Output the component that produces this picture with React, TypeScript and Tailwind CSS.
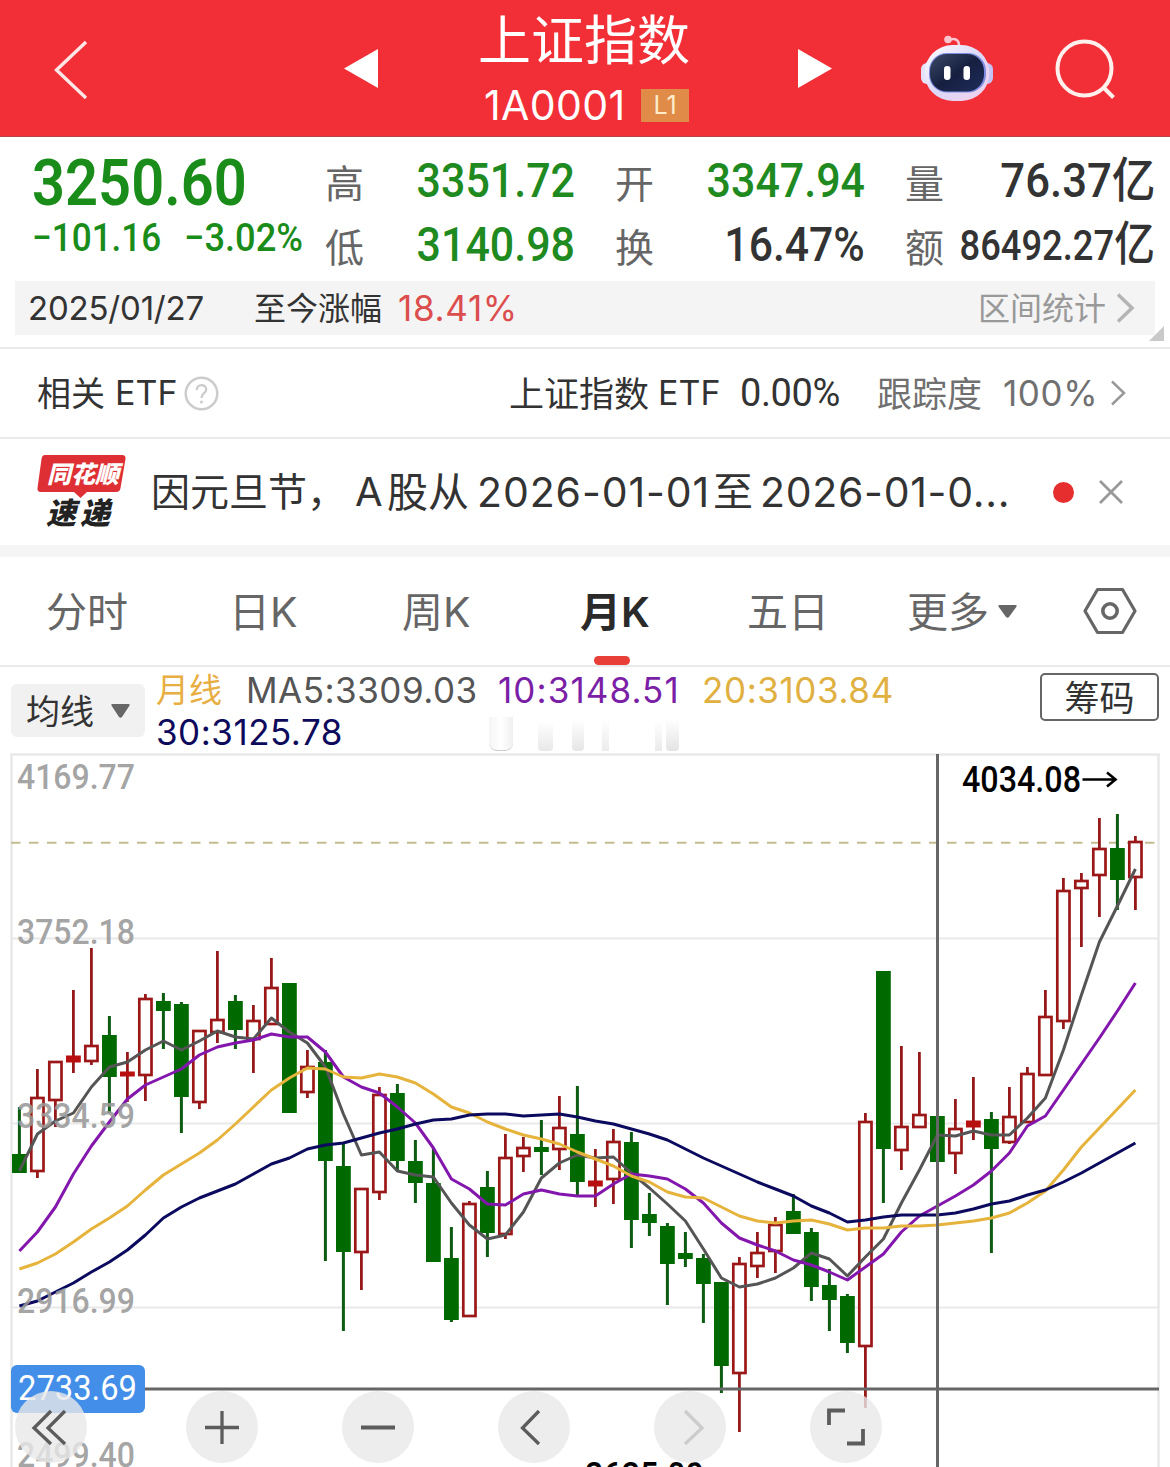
import { ReactNode } from 'react';

type Candle = ['up' | 'down', number, number, number, number];

// direction, high, body top, body bottom, low
const CANDLES: Candle[] = [
    ['down', 1107, 1154, 1173, 1173],
    ['up', 1069, 1097, 1171, 1178],
    ['up', 1061, 1061, 1100, 1127],
    ['up', 990, 1056, 1062, 1073],
    ['up', 948, 1045, 1061, 1065],
    ['down', 1016, 1035, 1077, 1113],
    ['up', 1052, 1072, 1076, 1102],
    ['up', 994, 998, 1075, 1101],
    ['down', 993, 1001, 1011, 1049],
    ['down', 1002, 1004, 1097, 1133],
    ['up', 1030, 1030, 1102, 1109],
    ['up', 951, 1019, 1032, 1043],
    ['down', 995, 1001, 1030, 1049],
    ['up', 1005, 1020, 1039, 1073],
    ['up', 958, 987, 1024, 1024],
    ['down', 983, 983, 1113, 1113],
    ['up', 1050, 1066, 1092, 1098],
    ['down', 1050, 1062, 1161, 1261],
    ['down', 1143, 1166, 1252, 1331],
    ['up', 1188, 1188, 1252, 1290],
    ['up', 1087, 1094, 1192, 1200],
    ['down', 1084, 1093, 1161, 1172],
    ['down', 1140, 1161, 1183, 1203],
    ['down', 1148, 1183, 1262, 1262],
    ['down', 1227, 1258, 1320, 1322],
    ['up', 1201, 1203, 1316, 1316],
    ['down', 1171, 1187, 1233, 1257],
    ['up', 1134, 1157, 1234, 1239],
    ['up', 1137, 1147, 1156, 1172],
    ['down', 1120, 1147, 1152, 1175],
    ['up', 1096, 1127, 1149, 1170],
    ['down', 1086, 1134, 1182, 1195],
    ['up', 1149, 1181, 1186, 1207],
    ['up', 1129, 1141, 1179, 1204],
    ['down', 1132, 1142, 1220, 1248],
    ['down', 1193, 1214, 1223, 1236],
    ['down', 1223, 1226, 1264, 1305],
    ['down', 1232, 1253, 1259, 1267],
    ['down', 1254, 1258, 1284, 1323],
    ['down', 1282, 1282, 1366, 1393],
    ['up', 1257, 1263, 1373, 1432],
    ['up', 1232, 1252, 1266, 1278],
    ['up', 1217, 1224, 1251, 1273],
    ['down', 1194, 1211, 1234, 1234],
    ['down', 1228, 1232, 1287, 1301],
    ['down', 1269, 1285, 1300, 1331],
    ['down', 1294, 1296, 1343, 1353],
    ['up', 1113, 1121, 1346, 1408],
    ['down', 971, 971, 1149, 1203],
    ['up', 1046, 1126, 1150, 1170],
    ['up', 1052, 1114, 1127, 1128],
    ['down', 1116, 1116, 1162, 1162],
    ['up', 1099, 1128, 1153, 1174],
    ['up', 1077, 1121, 1127, 1140],
    ['down', 1112, 1119, 1149, 1253],
    ['up', 1087, 1116, 1142, 1144],
    ['up', 1067, 1073, 1122, 1122],
    ['up', 990, 1016, 1075, 1075],
    ['up', 878, 890, 1021, 1029],
    ['up', 873, 880, 888, 947],
    ['up', 818, 848, 875, 917],
    ['down', 814, 848, 880, 910],
    ['up', 836, 841, 877, 910],
];

const MA5 = [
    1171, 1134, 1121, 1113, 1087, 1067, 1062, 1050, 1041, 1050, 1041, 1031, 1037, 1039, 1018, 1032,
    1043, 1067, 1114, 1155, 1152, 1171, 1175, 1177, 1203, 1225, 1239, 1235, 1212, 1178, 1163, 1155,
    1158, 1157, 1173, 1188, 1204, 1221, 1249, 1278, 1287, 1284, 1278, 1268, 1253, 1259, 1276, 1257,
    1239, 1203, 1170, 1135, 1136, 1131, 1135, 1135, 1118, 1098, 1050, 995, 942, 906, 869,
];
const MA10 = [
    1251, 1232, 1207, 1174, 1146, 1122, 1099, 1085, 1077, 1069, 1055, 1047, 1043, 1040, 1034, 1037,
    1037, 1052, 1077, 1087, 1093, 1107, 1123, 1148, 1179, 1189, 1204, 1205, 1194, 1190, 1194, 1196,
    1196, 1184, 1174, 1176, 1179, 1189, 1203, 1223, 1238, 1245, 1251, 1260, 1265, 1272, 1280, 1267,
    1254, 1232, 1216, 1206, 1196, 1185, 1171, 1153, 1126, 1116, 1090, 1064, 1038, 1011, 983,
];
const MA20 = [
    1269, 1263, 1254, 1242, 1229, 1218, 1206, 1190, 1175, 1164, 1153, 1140, 1124, 1107, 1090, 1078,
    1068, 1069, 1077, 1078, 1074, 1077, 1083, 1094, 1107, 1113, 1122, 1129, 1135, 1139, 1144, 1152,
    1159, 1166, 1176, 1182, 1192, 1197, 1198, 1207, 1216, 1221, 1223, 1221, 1220, 1224, 1230, 1228,
    1228, 1226, 1226, 1225, 1223, 1221, 1218, 1213, 1203, 1191, 1170, 1147, 1128, 1109, 1090,
];
const MA30 = [
    1306, 1301, 1292, 1283, 1272, 1262, 1250, 1235, 1218, 1207, 1198, 1191, 1184, 1174, 1164, 1158,
    1149, 1145, 1143, 1138, 1133, 1129, 1124, 1120, 1119, 1115, 1114, 1114, 1116, 1115, 1114, 1117,
    1121, 1124, 1129, 1134, 1140, 1149, 1158, 1166, 1174, 1182, 1189, 1196, 1206, 1213, 1222, 1220,
    1217, 1215, 1215, 1215, 1213, 1209, 1204, 1201, 1195, 1190, 1182, 1173, 1163, 1153, 1143,
];

const xAt = (i: number) => 19.4 + i * 18;
const toPoints = (ys: number[]) => ys.map((y, i) => `${xAt(i)},${y}`).join(' ');

const DIN = "font-['Roboto','Noto_Sans_CJK_SC',sans-serif]";

export default function App() {
    return (
        <div className="w-[1170px] h-[1467px] overflow-hidden bg-white text-[#333] whitespace-nowrap font-['Inter','Noto_Sans_CJK_SC',sans-serif]">
            <Header />
            <Quote />
            <EtfRow />
            <NewsRow />
            <Tabs />
            <Indicators />
            <Chart />
        </div>
    );
}

function Header() {
    return (
        <header className="h-[137px] flex bg-[#f22f37] border-b border-[#b8414a] text-white">
            <svg className="mt-[38px] ml-[52px] shrink-0" width="38" height="64" viewBox="0 0 38 64" fill="none">
                <path d="M34 4 4.5 32 34 60" stroke="#ffe6e6" strokeWidth="3.4" />
            </svg>
            <svg className="mt-[49px] ml-[254px] shrink-0" width="34" height="39" viewBox="0 0 34 39">
                <path d="M34 0v39L0 19.5z" fill="#fff" />
            </svg>
            <div className="ml-[87px] w-[245px] flex flex-col">
                <h1 className="h-[70px] pl-[13px] leading-[74px] text-[53px] font-['Noto_Sans_CJK_SC',sans-serif]">上证指数</h1>
                <div className="mt-[15px] w-full flex items-center pl-[19px]">
                    <span className="w-[157px] leading-[40px] text-[41px] tracking-[0.4px]">1A0001</span>
                    <span className="w-[48px] h-[33px] bg-[#e08c48] text-[#ffeccb] text-[25px] leading-[33px] text-center">
                        L1
                    </span>
                </div>
            </div>
            <svg className="mt-[49px] ml-[88px] shrink-0" width="34" height="39" viewBox="0 0 34 39">
                <path d="M0 0v39l34-19.5z" fill="#fff" />
            </svg>
            <Robot />
            <svg className="mt-[36px] ml-[60px] shrink-0" width="66" height="66" viewBox="0 0 66 66" fill="none" stroke="#fff0ee" strokeWidth="4">
                <circle cx="30.5" cy="32.5" r="27" />
                <path d="m49.500 51.500 10 10" />
            </svg>
        </header>
    );
}

function Robot() {
    return (
        <svg className="mt-[34px] ml-[88px] shrink-0" width="74" height="68" viewBox="0 0 74 68">
            <defs>
                <linearGradient id="shell" x1="0" y1="0" x2="1" y2="1">
                    <stop offset="0" stopColor="#fff" />
                    <stop offset="0.5" stopColor="#dcd8f8" />
                    <stop offset="1" stopColor="#f3cfea" />
                </linearGradient>
                <linearGradient id="visor" x1="0" y1="0" x2="1" y2="1">
                    <stop offset="0" stopColor="#3d4a66" />
                    <stop offset="0.5" stopColor="#161f40" />
                    <stop offset="1" stopColor="#1f2c5c" />
                </linearGradient>
            </defs>
            <path d="M30 5.500c6-1.500 9 1 9 6" fill="none" stroke="#fbc6d0" strokeWidth="2.500" />
            <circle cx="28" cy="5.500" r="3.800" fill="#fbc6d0" />
            <rect x="1" y="29" width="12" height="21" rx="6" fill="#e3e2fa" />
            <rect x="61" y="29" width="12" height="21" rx="6" fill="#c4c2f4" />
            <rect x="4.500" y="11" width="65" height="56" rx="28" fill="url(#shell)" />
            <rect x="9" y="19" width="57" height="39.500" rx="18" fill="#7d8be0" />
            <rect x="10" y="20" width="54" height="37.500" rx="17" fill="url(#visor)" />
            <rect x="24" y="32" width="6.500" height="14" rx="3.200" fill="#fff" />
            <rect x="43.500" y="32" width="6.500" height="14" rx="3.200" fill="#fff" />
        </svg>
    );
}

function Stat({ label, children }: { label: string; children: ReactNode }) {
    return (
        <div className="w-[250px] h-16 flex items-center justify-between">
            <span className="w-[39px] shrink-0 text-[39px] leading-[66px] text-[#666] font-normal font-['Noto_Sans_CJK_SC',sans-serif]">
                {label}
            </span>
            <span className="w-[205px] flex justify-end">{children}</span>
        </div>
    );
}

function Quote() {
    return (
        <section className="h-[212px] border-b-2 border-[#eaeaea]">
            <div className={`h-[144px] pt-3 pl-8 flex font-medium ${DIN}`}>
                <div className="w-[293px] text-[#1a8c1a]">
                    <div className="h-[65px] leading-[68px] text-[65px] font-semibold origin-left scale-x-[0.89]">3250.60</div>
                    <div className="h-12 leading-[48px] text-[39px] flex">
                        <span className="w-[152px] origin-left scale-x-[0.9]">−101.16</span>
                        <span className="origin-left scale-x-[0.93]">−3.02%</span>
                    </div>
                </div>
                <div className="flex gap-[40px] text-[48px] leading-[64px]">
                    <div>
                        <Stat label="高">
                            <span className="origin-right scale-x-[0.895] text-[#1f8a1f]">3351.72</span>
                        </Stat>
                        <Stat label="低">
                            <span className="origin-right scale-x-[0.895] text-[#1f8a1f]">3140.98</span>
                        </Stat>
                    </div>
                    <div>
                        <Stat label="开">
                            <span className="origin-right scale-x-[0.895] text-[#1f8a1f]">3347.94</span>
                        </Stat>
                        <Stat label="换">
                            <span className="origin-right scale-x-[0.89]">16.47%</span>
                        </Stat>
                    </div>
                    <div>
                        <Stat label="量">
                            <span className="origin-right scale-x-[0.91]">76.37亿</span>
                        </Stat>
                        <Stat label="额">
                            <span className="origin-right scale-x-[0.865] text-[42px]">
                                86492.27<span className="text-[47px]">亿</span>
                            </span>
                        </Stat>
                    </div>
                </div>
            </div>
            <div className="relative mx-[15px] h-[54px] pl-[13px] pr-[20px] flex items-center bg-[#f4f4f4] text-[33px] leading-[54px]">
                <span className="w-[226px] tracking-[-0.2px]">2025/01/27</span>
                <span className="w-[144px] text-[32px] pt-[2px]">至今涨幅</span>
                <span className="text-[35px] tracking-[0.700px] text-[#dc4d4d]">18.41%</span>
                <span className="ml-auto text-[32px] pt-[2px] text-[#999]">区间统计</span>
                <svg className="ml-[10px]" width="19" height="30" viewBox="0 0 19 30" fill="none">
                    <path d="m2 1.500 14 13.500L2 28.500" stroke="#b4b4b4" strokeWidth="3.500" />
                </svg>
                <svg className="absolute -right-[9px] top-[45px]" width="15" height="15" viewBox="0 0 15 15">
                    <path d="M15 0v15H0z" fill="#c9c9c9" />
                </svg>
            </div>
        </section>
    );
}

function EtfRow() {
    return (
        <section className="h-[90px] pl-[37px] flex items-center border-b-2 border-[#eaeaea] text-[34px] leading-[88px]">
            <span className="w-[78px] pt-[2px]">相关</span>
            <span className="w-[69px]">ETF</span>
            <svg width="35" height="35" viewBox="0 0 35 35" fill="none" stroke="#ccc">
                <circle cx="17.500" cy="17.500" r="15.800" strokeWidth="2.500" />
                <path d="M12.800 14c0-6.500 9.400-6.300 9.400-.6 0 4-4.700 3.600-4.700 8.600" strokeWidth="2.300" />
                <circle cx="17.500" cy="26" r="1.600" fill="#ccc" stroke="none" />
            </svg>
            <span className="ml-[290px] w-[149px] text-[35px] pt-[2px]">上证指数</span>
            <span className="w-[82px]">ETF</span>
            <span className={`w-[137px] text-[38px] tracking-[-0.4px] ${DIN}`}>0.00%</span>
            <span className="w-[126px] text-[35px] pt-[2px] text-[#707070]">跟踪度</span>
            <span className="w-[107px] text-[35px] tracking-[0.6px] text-[#707070]">100%</span>
            <svg width="16" height="26" viewBox="0 0 16 26" fill="none">
                <path d="m2 1.500 12 11.500L2 24.500" stroke="#999" strokeWidth="2.500" />
            </svg>
        </section>
    );
}

function NewsRow() {
    return (
        <section className="h-[118px] pl-[37px] flex items-center border-b-[12px] border-[#f5f5f5]">
            <div className="relative w-[114px] h-[74px] font-black italic font-['Noto_Sans_CJK_SC',sans-serif]">
                <svg className="absolute left-0 top-0" width="90" height="44" viewBox="0 0 90 44">
                    <path d="M8 0h77q4 0 3.500 4l-5 29q-.5 4-4.500 4H50l-6.500 6L37 37H4q-4 0-3.500-4l4-29q.5-4 3.500-4z" fill="#de3034" />
                </svg>
                <div className="relative pl-[10px] h-[37px] leading-[35px] text-[24px] text-white">同花顺</div>
                <div className="relative pl-[9px] h-[37px] leading-[38px] text-[30px] tracking-[4px] text-[#222]">速递</div>
            </div>
            <p className="w-[902px] leading-[106px] text-[40px] flex">
                <span className="w-[204px] text-[39px]">因元旦节，</span>
                <span className="w-[32px]">A</span>
                <span className="w-[90px] text-[41px]">股从</span>
                <span className="w-[236px] text-[41px] tracking-[0.9px]">2026-01-01</span>
                <span className="w-[47px]">至</span>
                <span className="text-[41px] tracking-[0.700px]">2026-01-0...</span>
            </p>
            <span className="w-[21px] h-[21px] rounded-full bg-[#e62e2e]" />
            <svg className="ml-[24px]" width="26" height="26" viewBox="0 0 26 26" fill="none">
                <path d="m2 2 22 22M24 2 2 24" stroke="#999" strokeWidth="2.800" />
            </svg>
        </section>
    );
}

function Tabs() {
    return (
        <nav className="h-[110px] pl-[46px] flex items-center border-b-2 border-[#eaeaea] text-[41px] leading-[105px] text-[#666]">
            <span className="w-[183px] pt-[3px]">分时</span>
            <span className="w-[173px] pt-[3px]">日K</span>
            <span className="w-[178px] pt-[3px]">周K</span>
            <span className="relative w-[167px] pt-[3px] font-semibold text-[#2a2a2a]">
                月K
                <i className="absolute left-[14px] bottom-0 w-[36px] h-[9px] rounded-full bg-[#e93f39]" />
            </span>
            <span className="w-[160px] pt-[3px]">五日</span>
            <span className="w-[91px] pt-[3px]">更多</span>
            <svg width="19" height="13" viewBox="0 0 19 13">
                <path d="M1.500 0h16q2 0 .7 2L11 12q-1.500 1.500-3 0L.8 2q-1.300-2 .7-2z" fill="#666" />
            </svg>
            <svg className="ml-[66px]" width="54" height="48" viewBox="0 0 54 48" fill="none" stroke="#666">
                <path d="M14.500 2.500h25L52 24 39.500 45.500h-25L2 24z" strokeWidth="3.200" strokeLinejoin="round" />
                <circle cx="27" cy="24" r="7.200" strokeWidth="3.600" />
            </svg>
        </nav>
    );
}

function Indicators() {
    return (
        <section className="relative h-[86px] flex text-[35px]">
            <button className="mt-[17px] ml-[11px] w-[134px] h-[53px] pl-[15px] flex items-center text-left rounded-md bg-[#f1f1f1] text-[34px] leading-[51px]">
                <span className="w-[85px] pt-[2px]">均线</span>
                <svg width="19" height="14" viewBox="0 0 19 14">
                    <path d="M1.500 0h16q2 0 .7 2L11 13q-1.500 1.500-3 0L.8 2q-1.300-2 .7-2z" fill="#666" />
                </svg>
            </button>
            <div className="ml-[11px] w-[884px] leading-[42px] pt-[2px] tracking-[0.5px]">
                <div className="h-[42px] flex">
                    <span className="w-[90px] text-[33px] tracking-normal text-[#e8ae42]">月线</span>
                    <span className="w-[252px] text-[#555]">MA5:3309.03</span>
                    <span className="w-[204px] tracking-[1.100px] text-[#7a1fa6]">10:3148.51</span>
                    <span className="tracking-[0.600px] text-[#e0b040]">20:3103.84</span>
                </div>
                <div className="text-[#0d0a5c]">30:3125.78</div>
            </div>
            <button className="mt-[6px] w-[119px] h-[48px] rounded-[5px] border-2 border-[#666] text-[35px] leading-[46px]">
                筹码
            </button>
            {/* Fading remains of a caption */}
            <div className="absolute left-[489px] top-[50px] h-[34px] flex items-end">
                <i className="w-[24px] h-[34px] rounded-b-lg border-b border-[#ccc] bg-linear-to-r from-[#f5f5f5] via-white to-[#f0f0f0]" />
                <i className="ml-[25px] w-[15px] h-[30px] rounded-b bg-linear-to-b from-white to-[#e8e8e8]" />
                <i className="ml-[19px] w-[12px] h-[32px] rounded-b bg-linear-to-b from-white to-[#e6e6e6]" />
                <i className="ml-[18px] w-[7px] h-[32px] bg-linear-to-b from-white to-[#ececec]" />
                <i className="ml-[46px] w-[7px] h-[30px] bg-linear-to-b from-white to-[#eaeaea]" />
                <i className="ml-[4px] w-[13px] h-[32px] rounded-b bg-linear-to-b from-white to-[#e4e4e4]" />
            </div>
        </section>
    );
}

function CandleShape({ candle, x }: { candle: Candle; x: number }) {
    const [dir, high, top, bottom, low] = candle;
    if (dir === 'down') {
        return (
            <g fill="#006a00">
                <rect x={x - 1.5} y={high} width="3" height={low - high} fill="#0d5c12" />
                <rect x={x - 7.4} y={top} width="14.800" height={bottom - top} />
            </g>
        );
    }
    return (
        <g fill="#961a1a">
            <rect x={x - 1.4} y={high} width="2.800" height={top - high} />
            <rect x={x - 1.4} y={bottom} width="2.800" height={low - bottom} />
            {bottom - top < 7 ? (
                <rect x={x - 7.4} y={top - 0.5} width="14.800" height={bottom - top + 1} fill="#b80f0f" />
            ) : (
                <rect x={x - 6.1} y={top + 1} width="12.200" height={bottom - top - 1} fill="#fff" stroke="#9c1818" strokeWidth="2.700" />
            )}
        </g>
    );
}

const SCALE: [string, number][] = [
    ['4169.77', 789],
    ['3752.18', 943.5],
    ['3334.59', 1128],
    ['2916.99', 1312.5],
    ['2499.40', 1467],
];

function Chart() {
    return (
        <section className="relative h-[714px]">
            <svg className={DIN} width="1170" height="714" viewBox="0 753 1170 714" fill="none">
                <g stroke="#e9e9e9" strokeWidth="2">
                    <path d="M10 754.500H1160M11.500 754V1467M1158.500 754V1467" strokeWidth="2.500" />
                    <path d="M12 938.500H1158M12 1123.500H1158M12 1307.500H1158" />
                </g>
                <path d="M11 842.700H1158" stroke="#c4bd90" strokeWidth="2" strokeDasharray="9.500 8.500" />
                {CANDLES.map((candle, i) => (
                    <CandleShape key={i} candle={candle} x={xAt(i)} />
                ))}
                <g strokeWidth="3" strokeLinejoin="round">
                    <polyline points={toPoints(MA5)} stroke="#555" />
                    <polyline points={toPoints(MA10)} stroke="#8316ac" />
                    <polyline points={toPoints(MA20)} stroke="#e6b43c" />
                    <polyline points={toPoints(MA30)} stroke="#0b0a5e" />
                </g>
                <g fill="#999" fillOpacity="0.9" fontSize="35" fontWeight="500">
                    {SCALE.map(([label, y]) => (
                        <text key={label} x="17" y={y} textLength="118" lengthAdjust="spacingAndGlyphs">
                            {label}
                        </text>
                    ))}
                </g>

                {/* Crosshair */}
                <path d="M937.500 754V1467" stroke="#666" strokeWidth="3" />
                <path d="M145 1389H1159" stroke="#666" strokeWidth="3" />
                <rect x="11" y="1365" width="134" height="48" rx="6" fill="#428ee8" />
                <text x="18" y="1400" fontSize="35" fill="#fff" textLength="119" lengthAdjust="spacingAndGlyphs">
                    2733.69
                </text>

                <g fill="#000" fontSize="36" fontWeight="500">
                    <text x="962" y="792" textLength="119" lengthAdjust="spacingAndGlyphs">4034.08</text>
                    <text x="585" y="1488" textLength="119" lengthAdjust="spacingAndGlyphs">2635.09</text>
                </g>
                <path d="M1082.500 779.500H1115M1107 772.500 1115.500 779.500 1107 786.500" stroke="#000" strokeWidth="2.600" />
            </svg>
            <div className="absolute left-[15px] top-[638px] flex gap-[84px]">
                <RoundButton className="mr-[15px]">
                    <path d="M36 20 19 37 36 53M50 20 33 37 50 53" />
                </RoundButton>
                <RoundButton>
                    <path d="M36 20V53M19 36.500H53" />
                </RoundButton>
                <RoundButton>
                    <path d="M19 36.500H53" strokeWidth="3.800" />
                </RoundButton>
                <RoundButton>
                    <path d="M41 20 24.500 37 41 53" />
                </RoundButton>
                <RoundButton>
                    <path d="M31 20 48 37 31 53" stroke="#ccc" />
                </RoundButton>
                <RoundButton>
                    <path d="M19 34V19.500H35M53 38V52.500H37" strokeWidth="3.800" />
                </RoundButton>
            </div>
        </section>
    );
}

function RoundButton({ className = '', children }: { className?: string; children: ReactNode }) {
    return (
        <button className={`w-[72px] h-[72px] shrink-0 rounded-full bg-[#e9e9e9]/80 ${className}`}>
            <svg width="72" height="72" viewBox="0 0 72 72" fill="none" stroke="#5c5c5c" strokeWidth="3.300">
                {children}
            </svg>
        </button>
    );
}
